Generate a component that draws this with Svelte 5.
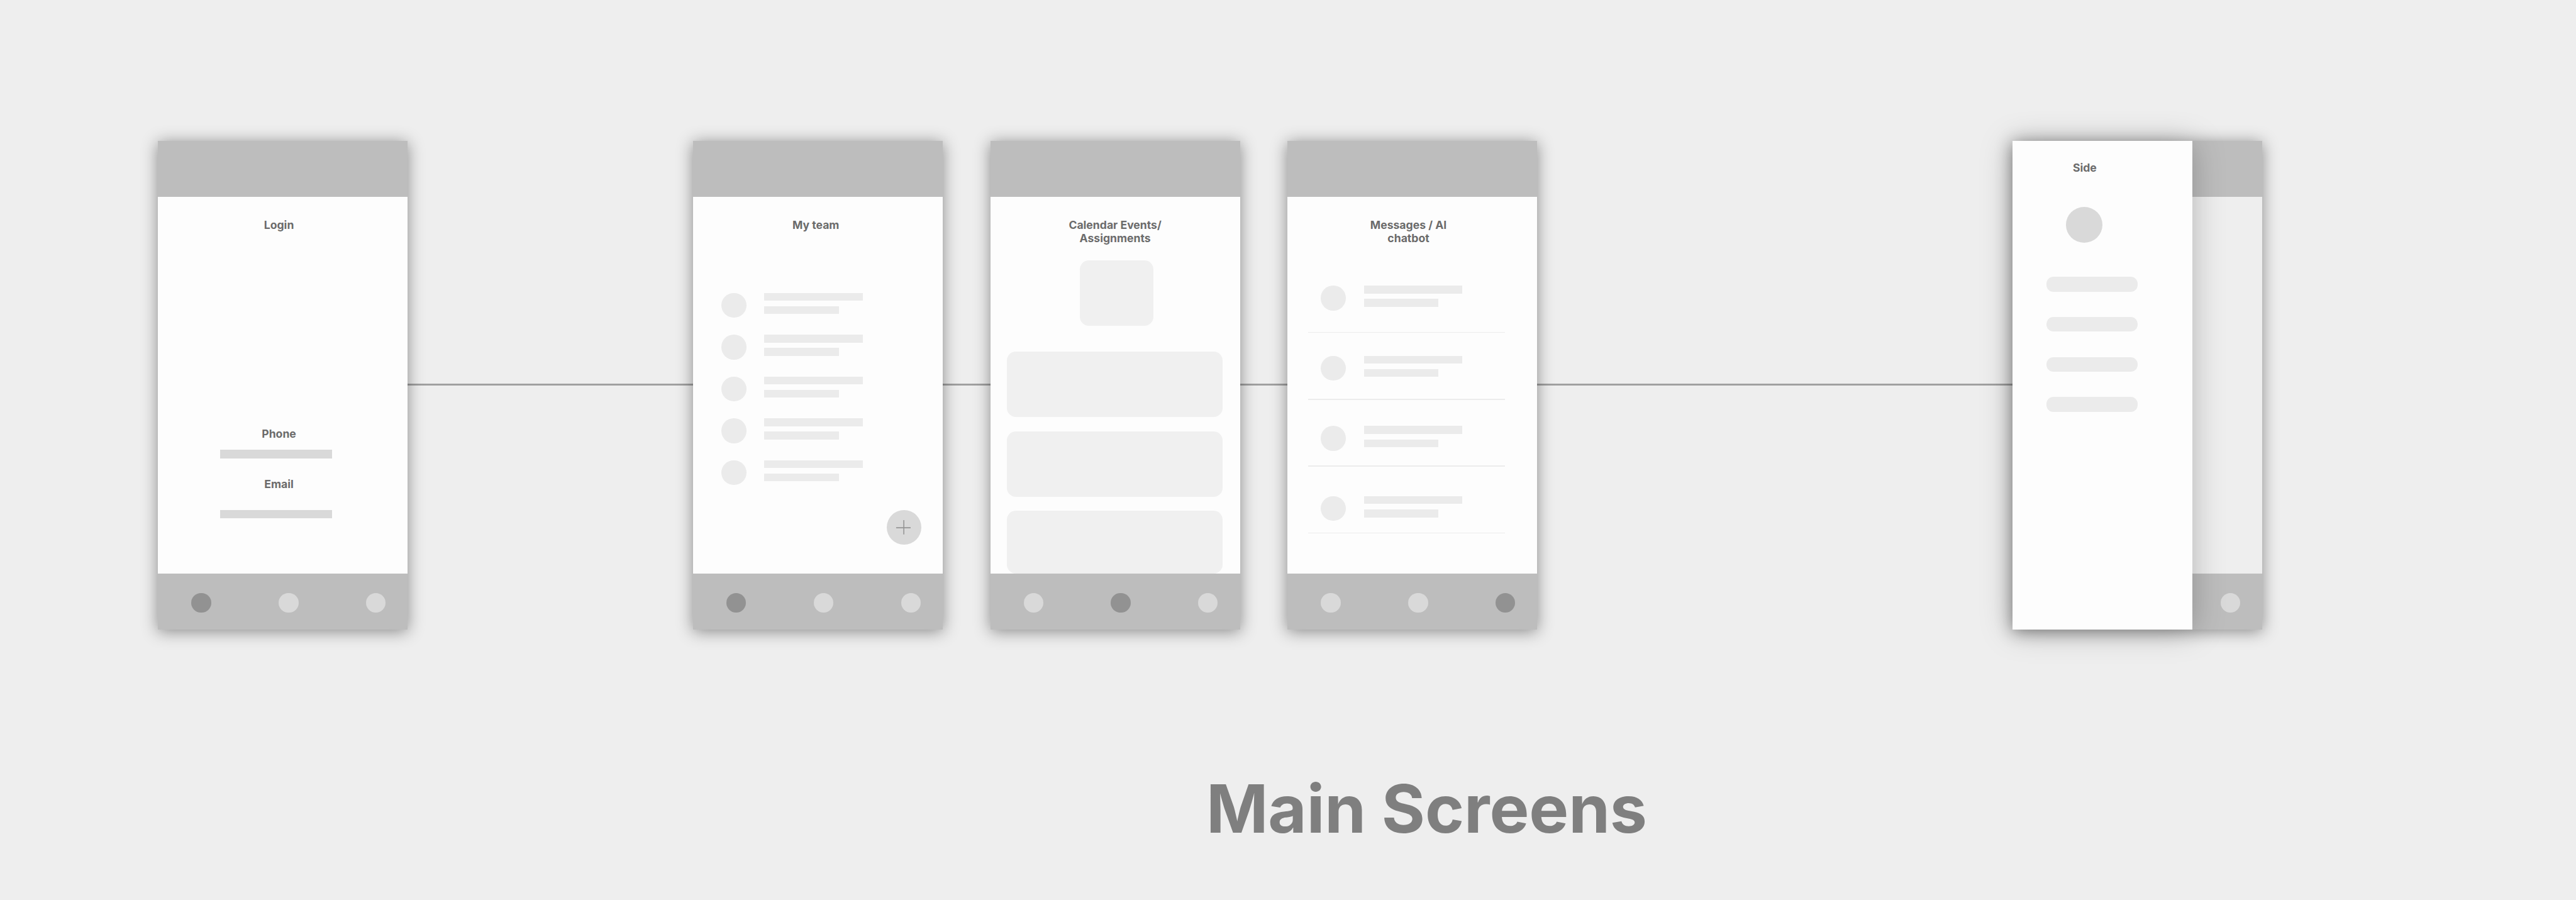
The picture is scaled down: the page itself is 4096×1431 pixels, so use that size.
<script>
  const team = [0, 1, 2, 3, 4];
  const chats = [0, 1, 2, 3];
  const links = [0, 1, 2, 3];
</script>

{#snippet tabs(active)}
  <footer class="tabs">
    {#each [0, 1, 2] as i}
      <span class="dot" class:active={i === active}></span>
    {/each}
  </footer>
{/snippet}

{#snippet person()}
  <div class="person">
    <span class="avatar"></span>
    <div class="lines">
      <span class="line"></span>
      <span class="line short"></span>
    </div>
  </div>
{/snippet}

<main class="board">
  <div class="flow">
    <div class="connector"></div>

    <section class="phone login">
      <header class="bar"></header>
      <div class="body">
        <h2>Login</h2>
        <h3 class="phone-label">Phone</h3>
        <span class="field"></span>
        <h3 class="email-label">Email</h3>
        <span class="field email-field"></span>
      </div>
      {@render tabs(0)}
    </section>

    <section class="phone team">
      <header class="bar"></header>
      <div class="body">
        <h2>My team</h2>
        <div class="people">
          {#each team as _}{@render person()}{/each}
        </div>
        <div class="fab">
          <svg viewBox="0 0 70 70">
            <path d="M19 35.8H48.3M34.5 20.2V49.4" fill="none" stroke="#949494" stroke-width="2" />
          </svg>
        </div>
      </div>
      {@render tabs(0)}
    </section>

    <section class="phone calendar">
      <header class="bar"></header>
      <div class="body">
        <h2>Calendar Events/<br />Assignments</h2>
        <div class="tile"></div>
        <div class="cards">
          <div class="card"></div>
          <div class="card"></div>
          <div class="card"></div>
        </div>
      </div>
      {@render tabs(1)}
    </section>

    <section class="phone messages">
      <header class="bar"></header>
      <div class="body">
        <h2>Messages / AI<br />chatbot</h2>
        <div class="threads">
          <div class="people">
            {#each chats as _}{@render person()}{/each}
          </div>
          <div class="rules">
            {#each chats as _}<span class="rule"></span>{/each}
          </div>
        </div>
      </div>
      {@render tabs(2)}
    </section>

    <section class="phone menu">
      <header class="bar"></header>
      <div class="body"></div>
      {@render tabs(0)}
      <aside class="drawer">
        <h2>Side</h2>
        <span class="profile"></span>
        <div class="links">
          {#each links as _}<span class="pill"></span>{/each}
        </div>
      </aside>
    </section>
  </div>

  <h1>Main Screens</h1>
</main>

<style>
  /* 1rem = 100 design units on a 5166-unit wide board */
  :global(html) {
    font-size: calc(100vw / 51.66);
    background: #eeeeee;
  }
  :global(body) {
    margin: 0;
    overflow: hidden;
  }
  .board {
    box-sizing: border-box;
    width: 100vw;
    height: 100vh;
    padding-top: 2.82rem;
    overflow: hidden;
    background: #eeeeee;
    font-family: Inter, 'Liberation Sans', sans-serif;
    color: #6b6b6b;
  }
  .flow {
    position: relative;
    display: flex;
    padding-left: 3.17rem;
  }
  .connector {
    position: absolute;
    left: 8rem;
    top: 4.87rem;
    width: 33rem;
    height: 0.036rem;
    background: #a0a0a0;
  }
  .phone {
    position: relative;
    flex: none;
    display: flex;
    flex-direction: column;
    width: 5.009rem;
    height: 9.811rem;
    background: #fdfdfd;
    box-shadow: 0 0.04rem 0.3rem rgba(0, 0, 0, 0.43);
  }
  .team { margin-left: 5.72rem; }
  .calendar { margin-left: 0.951rem; }
  .messages { margin-left: 0.954rem; }
  .menu { margin-left: 9.53rem; background: #eeeeee; }
  .bar {
    flex: none;
    height: 1.122rem;
    background: #bdbdbd;
  }
  .body {
    flex: none;
    display: flex;
    flex-direction: column;
    height: 7.56rem;
  }
  .tabs {
    display: flex;
    flex: 1;
    gap: 1.354rem;
    padding: 0.392rem 0 0 0.67rem;
    background: #bdbdbd;
  }
  .dot {
    width: 0.396rem;
    height: 0.396rem;
    border-radius: 50%;
    background: #d9d9d9;
  }
  .dot.active { background: #929292; }

  h1, h2, h3 { margin: 0; white-space: nowrap; }
  h2, h3 {
    font-size: 0.222rem;
    line-height: 0.264rem;
    font-weight: 700;
    text-align: center;
  }
  .body h2 { margin-top: 0.445rem; }

  .login h2, .login h3, .messages h2 { padding-right: 0.16rem; }
  .phone-label { margin-top: 3.929rem; }
  .field {
    width: 2.234rem;
    height: 0.169rem;
    margin: 0.179rem 0 0 1.25rem;
    background: #d9d9d9;
  }
  .email-label { margin-top: 0.393rem; }
  .email-field { margin-top: 0.381rem; }

  .people { display: flex; flex-direction: column; }
  .person { display: flex; gap: 0.362rem; }
  .avatar {
    width: 0.498rem;
    height: 0.498rem;
    border-radius: 50%;
    background: #ebebeb;
  }
  .lines {
    display: flex;
    flex-direction: column;
    gap: 0.111rem;
  }
  .line {
    width: 1.975rem;
    height: 0.157rem;
    background: #ebebeb;
  }
  .line.short { width: 1.493rem; }

  .team h2 { padding-right: 0.086rem; }
  .team .people {
    gap: 0.34rem;
    margin: 1.224rem 0 0 0.57rem;
  }
  .fab {
    width: 0.694rem;
    height: 0.694rem;
    margin: 0.498rem 0 0 3.881rem;
    border-radius: 50%;
    background: #d9d9d9;
  }
  .fab svg { display: block; width: 100%; height: 100%; }

  .tile {
    width: 1.47rem;
    height: 1.31rem;
    margin: 0.305rem 0 0 1.802rem;
    border-radius: 0.18rem;
    background: #f0f0f0;
  }
  .cards {
    display: flex;
    flex: 1;
    flex-direction: column;
    gap: 0.287rem;
    margin: 0.518rem 0.345rem 0 0.331rem;
  }
  .card {
    flex: none;
    height: 1.313rem;
    border-radius: 0.18rem;
    background: #f0f0f0;
  }
  .card:last-child { flex: 1; }

  .threads {
    display: grid;
    margin-top: 0.814rem;
  }
  .threads > * { grid-area: 1 / 1; }
  .threads .people {
    gap: 0.909rem;
    padding-left: 0.67rem;
  }
  .rules {
    display: flex;
    flex-direction: column;
    gap: 1.32rem;
    padding: 0.929rem 0 0 0.412rem;
  }
  .rule {
    width: 3.954rem;
    height: 0.02rem;
    background: #ececec;
  }

  .drawer {
    position: absolute;
    top: 0;
    left: 0;
    bottom: 0;
    box-sizing: border-box;
    display: flex;
    flex-direction: column;
    width: 3.608rem;
    padding-top: 0.425rem;
    background: #fdfdfd;
    box-shadow: 0 0.04rem 0.6rem rgba(0, 0, 0, 0.25);
  }
  .drawer h2 { padding-right: 0.71rem; }
  .profile {
    width: 0.736rem;
    height: 0.72rem;
    margin: 0.638rem 0 0 1.071rem;
    border-radius: 50%;
    background: #d9d9d9;
  }
  .links {
    display: flex;
    flex-direction: column;
    gap: 0.506rem;
    margin: 0.684rem 0 0 0.678rem;
  }
  .pill {
    width: 1.831rem;
    height: 0.298rem;
    border-radius: 0.14rem;
    background: #ebebeb;
  }

  h1 {
    margin-top: 2.79rem;
    padding-left: 24.19rem;
    font-size: 1.334rem;
    line-height: 1.6rem;
    font-weight: 700;
    letter-spacing: -0.0015rem;
    color: #7f7f7f;
  }
</style>
